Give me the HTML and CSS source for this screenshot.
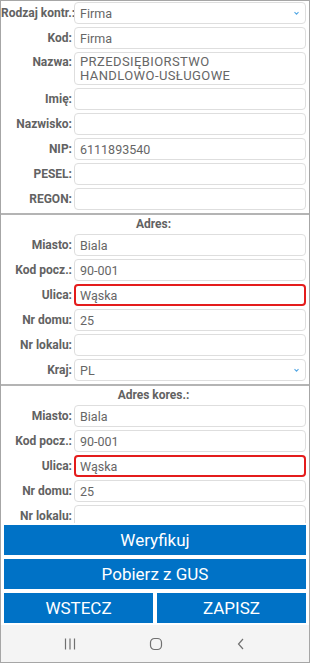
FILE: index.html
```html
<!DOCTYPE html>
<html lang="pl">

<head>
    <meta charset="UTF-8">
    <meta name="viewport" content="width=device-width, initial-scale=1.0">
    <title>Kontrahent</title>
    <link rel="stylesheet" href="styles.css">
</head>

<body>
    <div class="screen">
        <form class="form" id="contractorForm">
            <div class="row">
                <label for="type">Rodzaj kontr.:</label>
                <div class="select-wrap">
                    <select class="field" id="type" name="type">
                        <option>Firma</option>
                    </select>
                    <svg class="chevron" width="7" height="5" viewBox="0 0 7 5"><path d="M1.5 1.2 L3.5 3.2 L5.5 1.2" fill="none" stroke="#55a8e4" stroke-width="1.1"/></svg>
                </div>
            </div>
            <div class="row">
                <label for="code">Kod:</label>
                <input class="field" type="text" id="code" name="code" value="Firma">
            </div>
            <div class="row">
                <label for="name" class="label-top">Nazwa:</label>
                <textarea class="field field-area" id="name" name="name">PRZEDSIĘBIORSTWO
HANDLOWO-USŁUGOWE</textarea>
            </div>
            <div class="row">
                <label for="firstName">Imię:</label>
                <input class="field" type="text" id="firstName" name="firstName">
            </div>
            <div class="row">
                <label for="lastName">Nazwisko:</label>
                <input class="field" type="text" id="lastName" name="lastName">
            </div>
            <div class="row">
                <label for="nip">NIP:</label>
                <input class="field" type="text" id="nip" name="nip" value="6111893540">
            </div>
            <div class="row">
                <label for="pesel">PESEL:</label>
                <input class="field" type="text" id="pesel" name="pesel">
            </div>
            <div class="row">
                <label for="regon">REGON:</label>
                <input class="field" type="text" id="regon" name="regon">
            </div>

            <div class="divider"></div>
            <div class="section-title">Adres:</div>

            <div class="row">
                <label for="city">Miasto:</label>
                <input class="field" type="text" id="city" name="city" value="Biala">
            </div>
            <div class="row">
                <label for="zip">Kod pocz.:</label>
                <input class="field" type="text" id="zip" name="zip" value="90-001">
            </div>
            <div class="row">
                <label for="street">Ulica:</label>
                <input class="field field-error" type="text" id="street" name="street" value="Wąska">
            </div>
            <div class="row">
                <label for="house">Nr domu:</label>
                <input class="field" type="text" id="house" name="house" value="25">
            </div>
            <div class="row">
                <label for="flat">Nr lokalu:</label>
                <input class="field" type="text" id="flat" name="flat">
            </div>
            <div class="row">
                <label for="country">Kraj:</label>
                <div class="select-wrap">
                    <select class="field" id="country" name="country">
                        <option>PL</option>
                    </select>
                    <svg class="chevron" width="7" height="5" viewBox="0 0 7 5"><path d="M1.5 1.2 L3.5 3.2 L5.5 1.2" fill="none" stroke="#55a8e4" stroke-width="1.1"/></svg>
                </div>
            </div>

            <div class="divider"></div>
            <div class="section-title">Adres kores.:</div>

            <div class="row">
                <label for="city2">Miasto:</label>
                <input class="field" type="text" id="city2" name="city2" value="Biala">
            </div>
            <div class="row">
                <label for="zip2">Kod pocz.:</label>
                <input class="field" type="text" id="zip2" name="zip2" value="90-001">
            </div>
            <div class="row">
                <label for="street2">Ulica:</label>
                <input class="field field-error" type="text" id="street2" name="street2" value="Wąska">
            </div>
            <div class="row">
                <label for="house2">Nr domu:</label>
                <input class="field" type="text" id="house2" name="house2" value="25">
            </div>
            <div class="row">
                <label for="flat2">Nr lokalu:</label>
                <input class="field" type="text" id="flat2" name="flat2">
            </div>
        </form>

        <div class="actions">
            <button type="button" class="btn">Weryfikuj</button>
            <button type="button" class="btn">Pobierz z GUS</button>
            <div class="btn-row">
                <button type="button" class="btn">WSTECZ</button>
                <button type="submit" class="btn" form="contractorForm">ZAPISZ</button>
            </div>
        </div>

        <div class="navbar">
            <svg width="12" height="14" viewBox="0 0 12 14"><path d="M1.5 1.5 V12.5 M6 1.5 V12.5 M10.5 1.5 V12.5" stroke="#707070" stroke-width="1.2" fill="none"/></svg>
            <svg width="14" height="14" viewBox="0 0 14 14"><rect x="1.5" y="1.5" width="11" height="11" rx="4" fill="none" stroke="#707070" stroke-width="1.2"/></svg>
            <svg width="10" height="14" viewBox="0 0 10 14"><path d="M7 2 L2.5 7 L7 12" fill="none" stroke="#707070" stroke-width="1.2"/></svg>
        </div>
    </div>
</body>

</html>
```

FILE: styles.css
```css
* {
    box-sizing: border-box;
}

body {
    margin: 0;
    font-family: Roboto, "Liberation Sans", sans-serif;
    background: #fff;
}

.screen {
    width: 310px;
    height: 663px;
    border: 1px solid #a6a6a6;
    display: flex;
    flex-direction: column;
    overflow: hidden;
    background: #fff;
}

.form {
    flex: 1;
    overflow: hidden;
    margin: 0;
    padding: 1px 3px 0 0;
}

.row {
    display: grid;
    grid-template-columns: 71px 1fr;
    column-gap: 2px;
    margin-bottom: 3px;
}

.row label {
    font-size: 12px;
    font-weight: bold;
    color: #626262;
    text-align: right;
    line-height: 22px;
    white-space: nowrap;
}

.row .label-top {
    line-height: 20px;
}

.field {
    width: 100%;
    height: 22px;
    margin: 0;
    padding: 0 5px;
    border: 1px solid #dedede;
    border-radius: 4px;
    background: #fff;
    font-family: Roboto, "Liberation Sans", sans-serif;
    font-size: 12.5px;
    color: #666;
    outline: none;
}

.field-area {
    height: 33px;
    padding: 2px 5px;
    font-size: 13px;
    letter-spacing: 0.4px;
    line-height: 14px;
    resize: none;
    overflow: hidden;
    display: block;
}

.field-error {
    border: 2px solid #e41c1c;
    padding: 0 4px;
}

.select-wrap {
    position: relative;
}

.select-wrap select {
    appearance: none;
    -webkit-appearance: none;
    display: block;
}

.chevron {
    position: absolute;
    right: 6px;
    top: 9px;
}

.divider {
    height: 2px;
    background: #b4b4b4;
    margin-right: -3px;
}

.section-title {
    height: 19px;
    line-height: 19px;
    text-align: center;
    font-size: 12px;
    font-weight: bold;
    color: #626262;
}

.actions {
    display: flex;
    flex-direction: column;
    gap: 4px;
    padding: 2px 3px;
}

.btn-row {
    display: flex;
    gap: 4px;
}

.btn {
    width: 100%;
    height: 30px;
    border: none;
    background: #0072c6;
    color: #fff;
    font-family: Roboto, "Liberation Sans", sans-serif;
    font-size: 17px;
    cursor: pointer;
}

.btn-row .btn {
    flex: 1;
}

.navbar {
    height: 37px;
    background: #f4f4f4;
    display: flex;
    justify-content: center;
    align-items: center;
    gap: 73px;
}
```
